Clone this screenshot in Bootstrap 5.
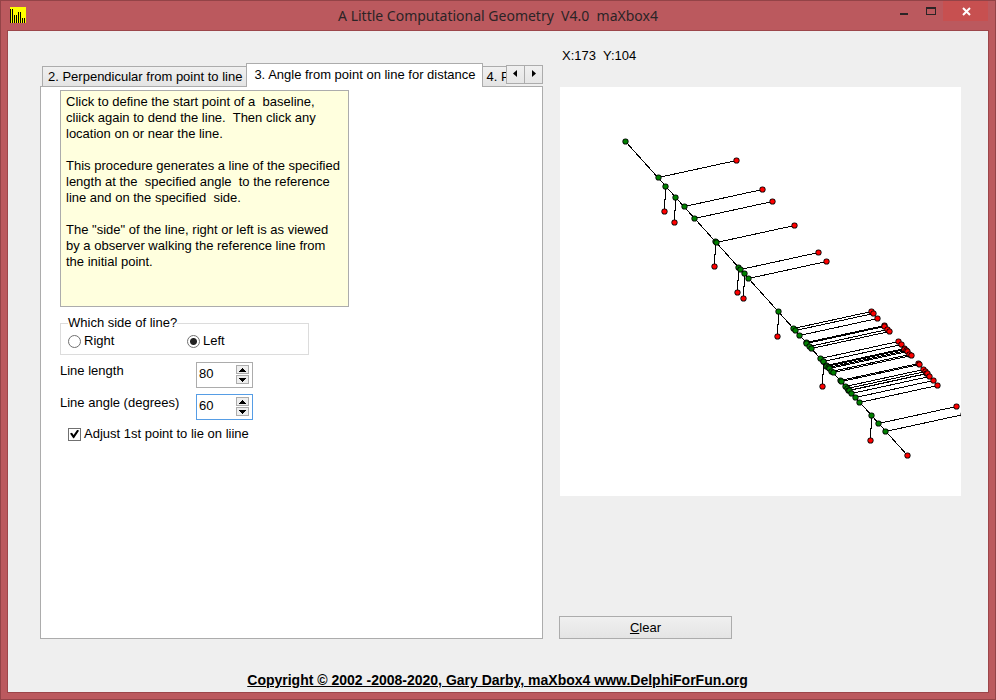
<!DOCTYPE html>
<html lang="en">
<head>
<meta charset="utf-8">
<meta name="viewport" content="width=device-width, initial-scale=1">
<title>A Little Computational Geometry</title>
<link href="https://cdn.jsdelivr.net/npm/bootstrap@5.3.0/dist/css/bootstrap.min.css" rel="stylesheet">
<style>
  body { font: 13px/16px "Liberation Sans", Arial, sans-serif; color: #000; background: #bb595e; }
  button, input, textarea { font: inherit; color: inherit; border-radius: 0; }
  .window { border: 1px solid #934347; padding: 0 6px 6px; }
  .titlebar { height: 29px; display: grid; grid-template-columns: 1fr auto 1fr; }
  .caption { font: 14px/30px "Noto Sans", sans-serif; color: #2b2426; white-space: pre; }
  .app-icon { margin: 6px 0 0 3px; }
  .win-btn { border: 0; background: none; padding: 0; width: 27px; height: 20px; }
  .win-close { background: #c75050; width: 45px; margin-right: 1px; }
  .client { background: #efefef; border: 1px solid #9c464a; padding: 14px 27px 3px 32px; }
  .work { gap: 17px; }
  .pane-left { padding-top: 18px; min-width: 0; }
  .tabs { height: 23px; padding-left: 2px; }
  .tab-btn { background: linear-gradient(#f0f0f0, #e4e4e4); border: 1px solid #acacac; border-bottom: 0; border-left: 0; height: 20px; padding: 0 4px; white-space: nowrap; }
  .tab-btn:first-child { border-left: 1px solid #acacac; padding-left: 5px; }
  .tab-btn.active { background: #fff; height: 24px; padding: 0 6px 2px 7px; margin-bottom: -1px; border-left: 1px solid #acacac; margin-left: -1px; position: relative; }
  .tab-cut { width: 23px; border-right: 0; overflow: hidden; flex: 1 1 0; text-align: left; }
  .tab-step { width: 19px; height: 19px; border: 1px solid #acacac; background: linear-gradient(#f0f0f0, #e6e6e6); padding: 0; margin-bottom: 2px; line-height: 0; }
  .tab-step + .tab-step { margin-left: -1px; }
  .page { background: #fff; border: 1px solid #acacac; padding: 3px 19px; }
  .memo { width: 289px; height: 217px; background: #ffffde; border: 1px solid #acacac; resize: none; padding: 3px 5px; overflow: hidden; outline: 0; }
  .side { width: 249px; height: 40px; border: 1px solid #dcdcdc; margin-top: 8px; padding: 0 0 0 7px; }
  .side legend { font-size: 13px; line-height: 16px; width: auto; float: none; }
  .opt { width: 119px; gap: 3px; padding-top: 2px; }
  .opt-radio, .opt-check { appearance: none; width: 13px; height: 13px; border: 1px solid #707070; margin: 0; flex: none; background: #fff; }
  .opt-radio { border-radius: 50%; }
  .opt-radio:checked { background: radial-gradient(circle, #222 3px, #fff 4px); }
  .opt-check:checked::before { content: ""; display: block; width: 9px; height: 9px; margin: 1px; background: #000; clip-path: polygon(0 45%, 22% 35%, 40% 60%, 82% 0, 100% 14%, 44% 96%, 36% 96%); }
  .fields { padding-top: 7px; }
  .field { height: 32px; }
  .field label { width: 136px; line-height: 18px; }
  .spin { width: 57px; height: 26px; border: 1px solid #acacac; background: #fff; }
  .spin.current { border-color: #569de5; }
  .spin input { border: 0; outline: 0; padding: 0 0 2px 2px; min-width: 0; width: 39px; background: none; }
  .arrows { width: 13px; margin: 2px 3px 3px 0; gap: 1px; }
  .arrows button { height: 9px; border: 1px solid #acacac; background: #eee; padding: 0; line-height: 0; display: grid; place-items: center; }
  .check-row { gap: 3px; }
  .pane-right { width: 401px; }
  .coords { height: 42px; padding: 3px 2px; }
  .plot { background: #fff; width: 401px; height: 409px; }
  .btn-clear { width: 173px; height: 23px; border: 1px solid #acacac; background: linear-gradient(#f0f0f0, #e4e4e4); padding: 0; margin-left: -1px; }
  .foot { padding: 33px 6px 0 0; }
  .credit { color: #000; font-size: 14px; font-weight: 700; white-space: nowrap; }
</style>
<script src="https://cdn.jsdelivr.net/npm/bootstrap@5.3.0/dist/js/bootstrap.bundle.min.js"></script>
</head>
<body>
<div class="window d-flex flex-column min-vh-100">
  <header class="titlebar">
    <svg class="app-icon" width="16" height="16" shape-rendering="crispEdges" aria-hidden="true"><path fill="#ff0" d="M0 0h16v16H0z"/><path stroke="#000" d="M.5 2v14M2.500 2v14M4.500 8v8M6.500 8v8M8.500 5v11M10.500 5v11M12.500 11v5M14.500 11v5"/></svg>
    <div class="caption">A Little Computational Geometry  V4.0  maXbox4</div>
    <div class="d-flex justify-content-end">
      <button class="win-btn" aria-label="Minimize"><svg class="d-block" width="27" height="20" shape-rendering="crispEdges"><path fill="#2b2426" d="M11 12h8v2h-8z"/></svg></button>
      <button class="win-btn" aria-label="Maximize"><svg class="d-block" width="27" height="20" shape-rendering="crispEdges"><path fill="#2b2426" fill-rule="evenodd" d="M10 6h10v8H10zM11 8v5h8V8z"/></svg></button>
      <button class="win-btn win-close" aria-label="Close"><svg class="d-block" width="45" height="20"><path stroke="#fff" stroke-width="2" d="M20 7l7 7M27 7l-7 7"/></svg></button>
    </div>
  </header>

  <main class="client d-flex flex-column flex-grow-1">
    <div class="work d-flex flex-grow-1">
      <section class="pane-left d-flex flex-column flex-grow-1">
        <div class="tabs d-flex align-items-end" role="tablist">
          <button class="tab-btn" role="tab">2. Perpendicular from point to line</button>
          <button class="tab-btn active" role="tab" aria-selected="true">3. Angle from point on line for distance</button>
          <button class="tab-btn tab-cut" role="tab">4. P</button>
          <button class="tab-step" aria-label="Previous tabs"><svg width="17" height="17"><path d="M10 4v7L6 7.500z"/></svg></button>
          <button class="tab-step" aria-label="Next tabs"><svg width="17" height="17"><path d="M7 4v7l4-3.500z"/></svg></button>
        </div>
        <form class="page flex-grow-1">
          <textarea class="memo d-block" readonly aria-label="Instructions">Click to define the start point of a  baseline,
cliick again to dend the line.  Then click any
location on or near the line.

This procedure generates a line of the specified
length at the  specified angle  to the reference
line and on the specified  side.

The "side" of the line, right or left is as viewed
by a observer walking the reference line from
the initial point.</textarea>
          <fieldset class="side">
            <legend class="m-0">Which side of line?</legend>
            <div class="d-flex">
              <label class="opt d-flex align-items-center"><input class="opt-radio" type="radio" name="side">Right</label>
              <label class="opt d-flex align-items-center"><input class="opt-radio" type="radio" name="side" checked>Left</label>
            </div>
          </fieldset>
          <div class="fields">
            <div class="field d-flex">
              <label for="len">Line length</label>
              <div class="spin d-flex">
                <input id="len" type="text" value="80">
                <div class="arrows d-flex flex-column"><button type="button" aria-label="Increase length"><svg width="7" height="4" shape-rendering="crispEdges"><path d="M3 0h1v1h1v1h1v1h1v1H0V3h1V2h1V1h1z"/></svg></button><button type="button" aria-label="Decrease length"><svg width="7" height="4" shape-rendering="crispEdges"><path d="M0 0h7v1H6v1H5v1H4v1H3V3H2V2H1V1H0z"/></svg></button></div>
              </div>
            </div>
            <div class="field d-flex">
              <label for="ang">Line angle (degrees)</label>
              <div class="spin current d-flex">
                <input id="ang" type="text" value="60">
                <div class="arrows d-flex flex-column"><button type="button" aria-label="Increase angle"><svg width="7" height="4" shape-rendering="crispEdges"><path d="M3 0h1v1h1v1h1v1h1v1H0V3h1V2h1V1h1z"/></svg></button><button type="button" aria-label="Decrease angle"><svg width="7" height="4" shape-rendering="crispEdges"><path d="M0 0h7v1H6v1H5v1H4v1H3V3H2V2H1V1H0z"/></svg></button></div>
              </div>
            </div>
            <label class="check-row d-flex align-items-center ps-2"><input class="opt-check" type="checkbox" checked>Adjust 1st point to lie on liine</label>
          </div>
        </form>
      </section>

      <section class="pane-right d-flex flex-column flex-shrink-0">
        <div class="coords">X:173&nbsp; Y:104</div>
        <svg class="plot" viewBox="560 87 401 409" role="img" aria-label="Angled lines drawn from a baseline">
          <defs>
            <marker id="g" markerWidth="8" markerHeight="8" refX="4" refY="4" markerUnits="userSpaceOnUse" shape-rendering="auto"><circle cx="4" cy="4" r="3.100"/><circle cx="4" cy="4" r="2.300" fill="#008000"/></marker>
            <marker id="r" markerWidth="8" markerHeight="8" refX="4" refY="4" markerUnits="userSpaceOnUse" shape-rendering="auto"><circle cx="4" cy="4" r="3.100"/><circle cx="4" cy="4" r="2.300" fill="#f00"/></marker>
          </defs>
          <g fill="none" stroke="#000" marker-start="url(#g)" marker-end="url(#r)" shape-rendering="crispEdges" transform="translate(.5 .5)">
            <path d="M625 141L907 455"/>
            <!-- short downward segments -->
            <path d="M665 186v13m-1-1v13"/><path d="M675 197v13m-1-1v13"/><path d="M715 241v13m-1-1v13"/><path d="M738 267v13m-1-1v13"/>
            <path d="M744 273v13m-1-1v13"/><path d="M778 311v13m-1-1v13"/><path d="M823 361v13m-1-1v13"/><path d="M871 415v13m-1-1v13"/>
            <!-- long segments to the right -->
            <path d="M658 177l78-17"/><path d="M684 206l78-17"/><path d="M694 218l78-17"/><path d="M716 242l78-17"/>
            <path d="M740 269l78-17"/><path d="M748 278l78-17"/>
            <path d="M793 328l78-17"/><path d="M795 330l78-17"/><path d="M799 335l78-17"/>
            <path d="M806 342l78-17"/><path d="M806 343l78-17"/><path d="M809 346l78-17"/><path d="M811 348l78-17"/>
            <path d="M820 358l78-17"/><path d="M823 361l78-17"/><path d="M826 365l78-17"/><path d="M826 366l78-17"/><path d="M828 367l78-17"/><path d="M829 368l78-17"/><path d="M831 371l78-17"/><path d="M833 372l78-17"/>
            <path d="M840 380l78-17"/><path d="M841 381l78-17"/>
            <path d="M845 386l78-17"/><path d="M847 388l78-17"/><path d="M848 390l78-17"/><path d="M849 390l78-17"/><path d="M851 393l78-17"/><path d="M855 397l78-17"/><path d="M859 402l78-17"/>
            <path d="M878 423l78-17"/><path d="M885 431l78-17"/>
          </g>
        </svg>
        <button class="btn-clear mt-auto" type="button"><u>C</u>lear</button>
      </section>
    </div>
    <footer class="foot text-center"><a class="credit" href="#">Copyright © 2002 -2008-2020, Gary Darby, maXbox4 www.DelphiForFun.org</a></footer>
  </main>
</div>
</body>
</html>
